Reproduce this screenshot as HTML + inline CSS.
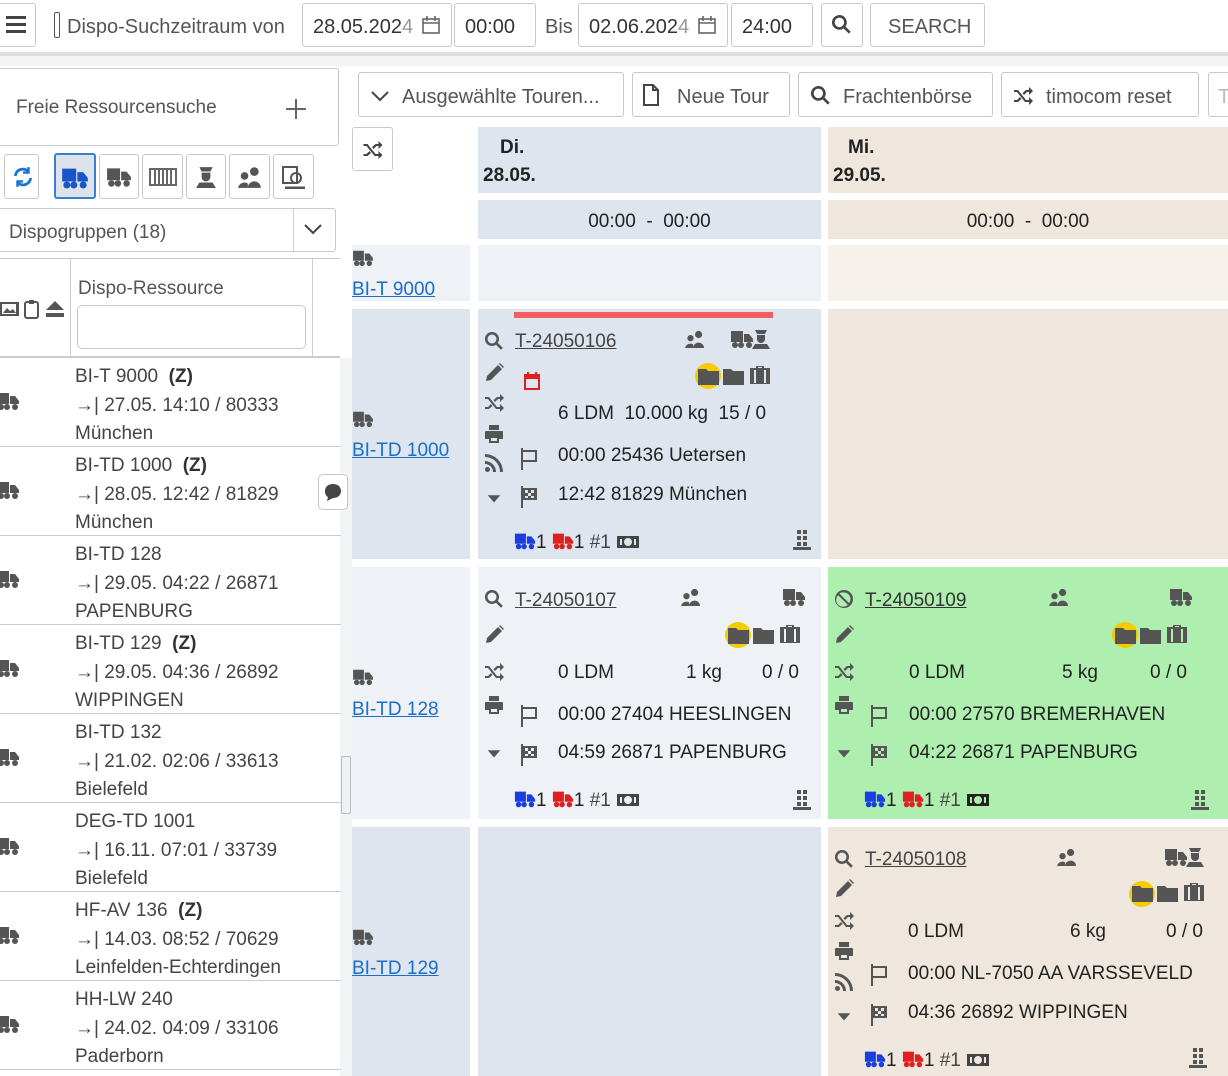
<!DOCTYPE html>
<html><head><meta charset="utf-8">
<style>
*{box-sizing:border-box;margin:0;padding:0}
body{width:1228px;height:1076px;overflow:hidden;background:#fff;font-family:"Liberation Sans",sans-serif;font-size:19px;color:#222;position:relative}
.a{position:absolute}
.box{position:absolute;border:1px solid #c8c8c8;border-radius:3px;background:#fff}
.g{color:#555}
.t{white-space:nowrap;line-height:22px;margin-top:2px}
svg.i{position:absolute;fill:#555}
u{text-decoration:underline}
a.l{color:#1a6fc9;text-decoration:underline}
</style></head><body>
<svg width="0" height="0" style="position:absolute">
<defs>
<symbol id="truck" viewBox="0 0 24 20"><path d="M1 2h12v11H1zM14 5h5l4 5v3h-9z"/><circle cx="5" cy="16" r="3"/><circle cx="11" cy="16" r="3"/><circle cx="19" cy="16" r="3"/></symbol>
<symbol id="search" viewBox="0 0 20 20"><path d="M8 1a7 7 0 1 0 4 12.7l5 5 1.8-1.8-5-5A7 7 0 0 0 8 1zm0 2.5a4.5 4.5 0 1 1 0 9 4.5 4.5 0 0 1 0-9z"/></symbol>
<symbol id="pencil" viewBox="0 0 20 20"><path d="M2 18l1-5L14 2l4 4L7 17zM15 1l4 4 1-1-4-4z"/></symbol>
<symbol id="shuf" viewBox="0 0 20 20"><path d="M1 5h4l8 10h3v-3l4 4-4 4v-3h-4L4 7H1zM1 15h3l3-3 1.5 2L5 17H1zM13 5h3V2l4 4-4 4V7h-2l-3 3-1.5-2z"/></symbol>
<symbol id="print" viewBox="0 0 20 20"><path d="M5 1h10v5H5zM2 7h16a1 1 0 0 1 1 1v7h-4v4H5v-4H1V8a1 1 0 0 1 1-1zm5 7v3h6v-3z"/></symbol>
<symbol id="rss" viewBox="0 0 20 20"><circle cx="3.5" cy="16.5" r="2.5"/><path d="M1 8a11 11 0 0 1 11 11H9a8 8 0 0 0-8-8zM1 1a18 18 0 0 1 18 18h-3A15 15 0 0 0 1 4z"/></symbol>
<symbol id="caret" viewBox="0 0 20 20"><path d="M3 7h14l-7 8z"/></symbol>
<symbol id="flag" viewBox="0 0 20 24"><path d="M2 1h2v22H2zM4 3h14v12H4v-2h12V5H4z"/></symbol>
<symbol id="check" viewBox="0 0 20 24"><path d="M2 1h2v22H2zM4 3h14v12H4zM6 5v3h3V5zm6 0v3h3V5zM9 8v3h3V8zm-3 3v2h3v-2zm6 0v2h3v-2z"/></symbol>
<symbol id="ppl" viewBox="0 0 24 20"><circle cx="16" cy="5" r="4"/><circle cx="7" cy="9" r="3.5"/><path d="M10 20a6 6 0 0 1 12 0zM1 20a6 6 0 0 1 9-4v4z"/></symbol>
<symbol id="folder" viewBox="0 0 24 20"><path d="M1 3h8l2 2h11v14H1z"/></symbol>
<symbol id="brief" viewBox="0 0 24 20"><path d="M8 3V1h8v2h6v16H2V3zm2 0h4V2h-4zM6 5v13h2V5zm10 0v13h2V5z"/></symbol>
<symbol id="cash" viewBox="0 0 24 16"><path d="M1 2h22v12H1zm11 2a4 4 0 1 0 0 8 4 4 0 0 0 0-8zM4 5v6h2V5zm14 0v6h2V5z"/></symbol>
<symbol id="pal" viewBox="0 0 20 22"><path d="M5 1h4v4H5zm6 0h4v4h-4zM5 7h4v4H5zm6 0h4v4h-4zM5 13h4v4H5zm6 0h4v4h-4zM1 18h18v3H1z"/></symbol>
<symbol id="drv" viewBox="0 0 20 20"><path d="M4 1h12l-2 4H6zM6 6h8v4a4 4 0 0 1-8 0zM1 20l3-5h12l3 5z"/></symbol>
<symbol id="cal" viewBox="0 0 20 20"><path d="M2 3h16v16H2zm2 5v9h12V8zM5 1h2v3H5zm8 0h2v3h-2z"/></symbol>
<symbol id="ban" viewBox="0 0 20 20"><path d="M10 1a9 9 0 1 0 0 18 9 9 0 0 0 0-18zm0 2.5a6.5 6.5 0 0 1 5 10.6L5.4 4.5A6.5 6.5 0 0 1 10 3.5zM4.2 6.2l9.6 9.6A6.5 6.5 0 0 1 4.2 6.2z"/></symbol>
</defs></svg>

<div class="a" style="left:0;top:0;width:1228px;height:52px;background:#fff"></div>
<div class="a" style="left:0;top:52px;width:1228px;height:4px;background:#dcdcdc"></div>
<div class="a" style="left:0;top:56px;width:1228px;height:10px;background:#f3f4f6"></div>
<div class="box" style="left:-4px;top:3px;width:40px;height:44px"></div>
<div class="a" style="left:6px;top:16px;width:20px;height:3px;background:#444;box-shadow:0 7px 0 #444,0 14px 0 #444"></div>
<div class="a" style="left:54px;top:12px;width:6px;height:26px;border:1.5px solid #555;border-radius:2px"></div>
<div class="a t g" style="left:67px;top:14px;font-size:20px">Dispo-Suchzeitraum von</div>
<div class="box" style="left:302px;top:3px;width:150px;height:44px"></div>
<div class="a t" style="left:313px;top:14px;font-size:20px;color:#333">28.05.202<span style="opacity:.5">4</span></div>
<svg class="i" style="left:421px;top:15px;fill:none;stroke:#666;stroke-width:1.6" width="20" height="20" viewBox="0 0 20 20"><rect x="2" y="4" width="16" height="14"/><path d="M2 8h16M6 1v5M14 1v5"/></svg>
<div class="box" style="left:454px;top:3px;width:82px;height:44px"></div>
<div class="a t" style="left:465px;top:14px;font-size:20px;color:#333">00:00</div>
<div class="a t g" style="left:545px;top:14px;font-size:20px">Bis</div>
<div class="box" style="left:578px;top:3px;width:150px;height:44px"></div>
<div class="a t" style="left:589px;top:14px;font-size:20px;color:#333">02.06.202<span style="opacity:.5">4</span></div>
<svg class="i" style="left:697px;top:15px;fill:none;stroke:#666;stroke-width:1.6" width="20" height="20" viewBox="0 0 20 20"><rect x="2" y="4" width="16" height="14"/><path d="M2 8h16M6 1v5M14 1v5"/></svg>
<div class="box" style="left:731px;top:3px;width:82px;height:44px"></div>
<div class="a t" style="left:742px;top:14px;font-size:20px;color:#333">24:00</div>
<div class="box" style="left:821px;top:3px;width:42px;height:44px"></div>
<svg class="i" style="left:831px;top:14px;fill:#444" width="21" height="21"><use href="#search"/></svg>
<div class="box" style="left:870px;top:3px;width:115px;height:44px"></div>
<div class="a t g" style="left:888px;top:14px;font-size:20px">SEARCH</div>

<div class="box" style="left:-4px;top:68px;width:343px;height:78px"></div>
<div class="a t g" style="left:16px;top:95px;font-size:19px">Freie Ressourcensuche</div>
<div class="a" style="left:286px;top:108px;width:20px;height:2px;background:#666"></div>
<div class="a" style="left:295px;top:99px;width:2px;height:20px;background:#666"></div>

<div class="box" style="left:4px;top:154px;width:35px;height:45px"></div>
<svg class="a" style="left:12px;top:166px" width="22" height="22" viewBox="0 0 20 20" fill="none" stroke="#1a73d9" stroke-width="2.6"><path d="M3 9a7 7 0 0 1 12-4M17 11a7 7 0 0 1-12 4"/><path d="M15 1v5h-5M5 19v-5h5" stroke-width="2.2"/></svg>
<div class="box" style="left:54px;top:153px;width:42px;height:46px;background:#dde3ea;border:2px solid #3b7ed0"></div>
<svg class="i" style="left:61px;top:166px;fill:#1a55c8" width="28" height="24"><use href="#truck"/></svg>
<div class="box" style="left:99px;top:154px;width:40px;height:45px"></div>
<svg class="i" style="left:106px;top:166px;fill:#555" width="26" height="22"><use href="#truck"/></svg>
<div class="box" style="left:142px;top:154px;width:41px;height:45px"></div>
<svg class="a" style="left:149px;top:168px" width="28" height="18" viewBox="0 0 28 18" fill="none" stroke="#666" stroke-width="2"><rect x="1" y="1" width="26" height="16"/><path d="M6 2v14M10 2v14M14 2v14M18 2v14M22 2v14"/></svg>
<div class="box" style="left:186px;top:154px;width:40px;height:45px"></div>
<svg class="i" style="left:195px;top:166px;fill:#555" width="22" height="22"><use href="#drv"/></svg>
<div class="box" style="left:229px;top:154px;width:41px;height:45px"></div>
<svg class="i" style="left:237px;top:166px;fill:#555" width="26" height="22"><use href="#ppl"/></svg>
<div class="box" style="left:273px;top:154px;width:41px;height:45px"></div>
<svg class="a" style="left:281px;top:165px" width="26" height="24" viewBox="0 0 26 24" fill="none" stroke="#555" stroke-width="2"><rect x="2" y="2" width="14" height="16"/><circle cx="15" cy="13" r="5"/><path d="M4 23h20" stroke-width="3"/></svg>

<div class="box" style="left:-4px;top:208px;width:340px;height:44px"></div>
<div class="a" style="left:293px;top:209px;width:1px;height:42px;background:#ccc"></div>
<div class="a t g" style="left:9px;top:220px;font-size:19px">Dispogruppen (18)</div>
<svg class="a" style="left:303px;top:222px" width="20" height="14" fill="none" stroke="#444" stroke-width="2"><path d="M2 3l8 8 8-8"/></svg>

<div class="a" style="left:0;top:258px;width:340px;height:1px;background:#ccc"></div>
<div class="a" style="left:70px;top:259px;width:1px;height:98px;background:#ccc"></div>
<div class="a" style="left:312px;top:259px;width:1px;height:98px;background:#ccc"></div>
<div class="a" style="left:0;top:356px;width:340px;height:2px;background:#ccc"></div>
<svg class="a" style="left:0;top:299px" width="66" height="20" viewBox="0 0 66 20"><rect x="0" y="3" width="19" height="14" fill="#555"/><rect x="2" y="5" width="14" height="10" fill="#fff"/><path d="M3 14l4-5 3 3 3-2 3 4z" fill="#555"/><rect x="25" y="3" width="13" height="16" rx="2" fill="none" stroke="#555" stroke-width="2"/><rect x="29" y="1" width="5" height="4" fill="#555"/><path d="M46 11l9-9 9 9zM46 14h18v4H46z" fill="#555"/></svg>
<div class="a t g" style="left:78px;top:276px;font-size:19px">Dispo-Ressource</div>
<div class="box" style="left:77px;top:305px;width:229px;height:44px;border-radius:5px"></div>

<div class="a" style="left:340px;top:358px;width:12px;height:718px;background:#f1f3f5"></div>
<div class="a" style="left:341px;top:756px;width:10px;height:58px;border:1px solid #bbb;background:#eef0f3;border-radius:2px"></div>

<div class="a" style="left:0;top:358px;width:341px">
<div style="position:relative;height:89px;border-bottom:1px solid #ccc"><svg class="i" style="left:-4px;top:33px" width="24" height="20"><use href="#truck"/></svg><div class="a t" style="left:75px;top:6px;color:#444">BI-T 9000 &nbsp;<b style="color:#333">(Z)</b></div><div class="a t" style="left:75px;top:35px;color:#444">→| 27.05. 14:10 / 80333</div><div class="a t" style="left:75px;top:63px;color:#444">München</div></div>
<div style="position:relative;height:89px;border-bottom:1px solid #ccc"><svg class="i" style="left:-4px;top:33px" width="24" height="20"><use href="#truck"/></svg><div class="a t" style="left:75px;top:6px;color:#444">BI-TD 1000 &nbsp;<b style="color:#333">(Z)</b></div><div class="a t" style="left:75px;top:35px;color:#444">→| 28.05. 12:42 / 81829</div><div class="a t" style="left:75px;top:63px;color:#444">München</div><div class="box" style="left:318px;top:27px;width:30px;height:36px;border-radius:5px"></div><svg class="a" style="left:324px;top:36px" width="18" height="18" viewBox="0 0 18 18"><path d="M9 1c5 0 8 3 8 7s-3 7-8 7l-6 3 1-4C2 13 1 11 1 8c0-4 3-7 8-7z" fill="#444"/></svg></div>
<div style="position:relative;height:89px;border-bottom:1px solid #ccc"><svg class="i" style="left:-4px;top:33px" width="24" height="20"><use href="#truck"/></svg><div class="a t" style="left:75px;top:6px;color:#444">BI-TD 128</div><div class="a t" style="left:75px;top:35px;color:#444">→| 29.05. 04:22 / 26871</div><div class="a t" style="left:75px;top:63px;color:#444">PAPENBURG</div></div>
<div style="position:relative;height:89px;border-bottom:1px solid #ccc"><svg class="i" style="left:-4px;top:33px" width="24" height="20"><use href="#truck"/></svg><div class="a t" style="left:75px;top:6px;color:#444">BI-TD 129 &nbsp;<b style="color:#333">(Z)</b></div><div class="a t" style="left:75px;top:35px;color:#444">→| 29.05. 04:36 / 26892</div><div class="a t" style="left:75px;top:63px;color:#444">WIPPINGEN</div></div>
<div style="position:relative;height:89px;border-bottom:1px solid #ccc"><svg class="i" style="left:-4px;top:33px" width="24" height="20"><use href="#truck"/></svg><div class="a t" style="left:75px;top:6px;color:#444">BI-TD 132</div><div class="a t" style="left:75px;top:35px;color:#444">→| 21.02. 02:06 / 33613</div><div class="a t" style="left:75px;top:63px;color:#444">Bielefeld</div></div>
<div style="position:relative;height:89px;border-bottom:1px solid #ccc"><svg class="i" style="left:-4px;top:33px" width="24" height="20"><use href="#truck"/></svg><div class="a t" style="left:75px;top:6px;color:#444">DEG-TD 1001</div><div class="a t" style="left:75px;top:35px;color:#444">→| 16.11. 07:01 / 33739</div><div class="a t" style="left:75px;top:63px;color:#444">Bielefeld</div></div>
<div style="position:relative;height:89px;border-bottom:1px solid #ccc"><svg class="i" style="left:-4px;top:33px" width="24" height="20"><use href="#truck"/></svg><div class="a t" style="left:75px;top:6px;color:#444">HF-AV 136 &nbsp;<b style="color:#333">(Z)</b></div><div class="a t" style="left:75px;top:35px;color:#444">→| 14.03. 08:52 / 70629</div><div class="a t" style="left:75px;top:63px;color:#444">Leinfelden-Echterdingen</div></div>
<div style="position:relative;height:89px;border-bottom:1px solid #ccc"><svg class="i" style="left:-4px;top:33px" width="24" height="20"><use href="#truck"/></svg><div class="a t" style="left:75px;top:6px;color:#444">HH-LW 240</div><div class="a t" style="left:75px;top:35px;color:#444">→| 24.02. 04:09 / 33106</div><div class="a t" style="left:75px;top:63px;color:#444">Paderborn</div></div>
</div>

<div class="box" style="left:358px;top:72px;width:266px;height:45px"></div>
<svg class="a" style="left:370px;top:89px" width="20" height="14" fill="none" stroke="#444" stroke-width="2"><path d="M2 3l8 8 8-8"/></svg>
<div class="a t g" style="left:402px;top:84px;font-size:20px">Ausgewählte Touren...</div>
<div class="box" style="left:632px;top:72px;width:158px;height:45px"></div>
<svg class="a" style="left:642px;top:84px" width="18" height="22" viewBox="0 0 18 22" fill="none" stroke="#444" stroke-width="2"><path d="M2 1h9l5 5v15H2zM11 1v5h5"/></svg>
<div class="a t g" style="left:677px;top:84px;font-size:20px">Neue Tour</div>
<div class="box" style="left:798px;top:72px;width:195px;height:45px"></div>
<svg class="i" style="left:810px;top:85px;fill:#444" width="21" height="21"><use href="#search"/></svg>
<div class="a t g" style="left:843px;top:84px;font-size:20px">Frachtenbörse</div>
<div class="box" style="left:1001px;top:72px;width:198px;height:45px"></div>
<svg class="i" style="left:1012px;top:85px;fill:#444" width="22" height="20"><use href="#shuf"/></svg>
<div class="a t g" style="left:1046px;top:84px;font-size:20px">timocom reset</div>
<div class="box" style="left:1208px;top:72px;width:40px;height:45px"></div>
<div class="a t" style="left:1218px;top:84px;font-size:20px;color:#bbb">T</div>

<div class="box" style="left:352px;top:127px;width:41px;height:44px"></div>
<svg class="i" style="left:362px;top:139px;fill:#444" width="21" height="20"><use href="#shuf"/></svg>

<div class="a" style="left:478px;top:127px;width:343px;height:66px;background:#dfe5ee"></div>
<div class="a t" style="left:500px;top:135px;font-weight:bold;font-size:19px">Di.</div>
<div class="a t" style="left:483px;top:163px;font-weight:bold;font-size:19px">28.05.</div>
<div class="a" style="left:828px;top:127px;width:400px;height:66px;background:#efe7dd"></div>
<div class="a t" style="left:848px;top:135px;font-weight:bold;font-size:19px">Mi.</div>
<div class="a t" style="left:833px;top:163px;font-weight:bold;font-size:19px">29.05.</div>
<div class="a" style="left:478px;top:200px;width:343px;height:39px;background:#dfe5ee"></div>
<div class="a t" style="left:478px;top:209px;width:343px;text-align:center;font-size:19px">00:00 &nbsp;- &nbsp;00:00</div>
<div class="a" style="left:828px;top:200px;width:400px;height:39px;background:#efe7dd"></div>
<div class="a t" style="left:828px;top:209px;width:400px;text-align:center;font-size:19px">00:00 &nbsp;- &nbsp;00:00</div>

<div class="a" style="left:352px;top:245px;width:118px;height:56px;background:#eef2f7"></div>
<div class="a" style="left:478px;top:245px;width:343px;height:56px;background:#eef2f7"></div>
<div class="a" style="left:828px;top:245px;width:400px;height:56px;background:#f6f1eb"></div>
<svg class="i" style="left:352px;top:249px" width="22" height="18"><use href="#truck"/></svg>
<a class="a t l" style="left:352px;top:277px;font-size:19px">BI-T 9000</a>

<div class="a" style="left:352px;top:309px;width:118px;height:250px;background:#dfe5ee"></div>
<div class="a" style="left:478px;top:309px;width:343px;height:250px;background:#dfe5ee"></div>
<div class="a" style="left:828px;top:309px;width:400px;height:250px;background:#efe7dd"></div>
<svg class="i" style="left:352px;top:410px" width="22" height="18"><use href="#truck"/></svg>
<a class="a t l" style="left:352px;top:438px;font-size:19px">BI-TD 1000</a>

<div class="a" style="left:352px;top:567px;width:118px;height:252px;background:#eef2f7"></div>
<div class="a" style="left:478px;top:567px;width:343px;height:252px;background:#eef2f7"></div>
<div class="a" style="left:828px;top:567px;width:400px;height:252px;background:#aeeeae"></div>
<svg class="i" style="left:352px;top:668px" width="22" height="18"><use href="#truck"/></svg>
<a class="a t l" style="left:352px;top:697px;font-size:19px">BI-TD 128</a>

<div class="a" style="left:352px;top:827px;width:118px;height:249px;background:#dfe5ee"></div>
<div class="a" style="left:478px;top:827px;width:343px;height:249px;background:#dfe5ee"></div>
<div class="a" style="left:828px;top:827px;width:400px;height:249px;background:#efe7dd"></div>
<svg class="i" style="left:352px;top:928px" width="22" height="18"><use href="#truck"/></svg>
<a class="a t l" style="left:352px;top:956px;font-size:19px">BI-TD 129</a>

<div class="a" style="left:478px;top:309px;width:343px;height:250px">
<div class="a" style="left:36px;top:3px;width:259px;height:6px;background:#f06060"></div>
<svg class="i" style="left:6px;top:22px" width="20" height="20"><use href="#search"/></svg>
<div class="a t" style="left:37px;top:20px;color:#444"><u>T-24050106</u></div>
<svg class="i" style="left:206px;top:21px" width="22" height="18"><use href="#ppl"/></svg>
<svg class="i" style="left:252px;top:20px" width="24" height="20"><use href="#truck"/></svg>
<svg class="i" style="left:273px;top:20px" width="20" height="20"><use href="#drv"/></svg>
<svg class="i" style="left:6px;top:54px" width="20" height="20"><use href="#pencil"/></svg>
<svg class="i" style="left:44px;top:62px;fill:#e02020" width="20" height="20"><use href="#cal"/></svg>
<div class="a" style="left:217px;top:54px;width:26px;height:26px;border-radius:50%;background:#f5cc00"></div>
<svg class="i" style="left:219px;top:57px" width="24" height="20"><use href="#folder"/></svg>
<svg class="i" style="left:244px;top:57px" width="24" height="20"><use href="#folder"/></svg>
<svg class="i" style="left:270px;top:55px" width="24" height="22"><use href="#brief"/></svg>
<svg class="i" style="left:6px;top:83px" width="20" height="20"><use href="#shuf"/></svg>
<div class="a t" style="left:80px;top:92px">6 LDM &nbsp;10.000 kg &nbsp;15 / 0</div>
<svg class="i" style="left:6px;top:115px" width="20" height="20"><use href="#print"/></svg>
<svg class="i" style="left:6px;top:144px" width="20" height="20"><use href="#rss"/></svg>
<svg class="i" style="left:40px;top:138px" width="22" height="24"><use href="#flag"/></svg>
<div class="a t" style="left:80px;top:134px">00:00 25436 Uetersen</div>
<svg class="i" style="left:7px;top:180px" width="18" height="18"><use href="#caret"/></svg>
<svg class="i" style="left:40px;top:176px" width="22" height="24"><use href="#check"/></svg>
<div class="a t" style="left:80px;top:173px">12:42 81829 München</div>
<div class="a" style="left:36px;top:222px;height:24px;white-space:nowrap;font-size:19px"><svg width="22" height="20" style="fill:#1a3ee0;vertical-align:-3px"><use href="#truck"/></svg>1 <svg width="22" height="20" style="fill:#e02020;vertical-align:-3px"><use href="#truck"/></svg>1 <span style="color:#444">#1</span> <svg width="24" height="16" style="fill:#444;vertical-align:-2px"><use href="#cash"/></svg></div>
<svg class="i" style="left:314px;top:220px" width="20" height="22"><use href="#pal"/></svg>
</div>

<div class="a" style="left:478px;top:567px;width:343px;height:252px">
<svg class="i" style="left:6px;top:22px" width="20" height="20"><use href="#search"/></svg>
<div class="a t" style="left:37px;top:21px;color:#444"><u>T-24050107</u></div>
<svg class="i" style="left:202px;top:21px" width="22" height="18"><use href="#ppl"/></svg>
<svg class="i" style="left:304px;top:20px" width="24" height="20"><use href="#truck"/></svg>
<svg class="i" style="left:6px;top:58px" width="20" height="20"><use href="#pencil"/></svg>
<div class="a" style="left:247px;top:55px;width:26px;height:26px;border-radius:50%;background:#f5cc00"></div>
<svg class="i" style="left:249px;top:58px" width="24" height="20"><use href="#folder"/></svg>
<svg class="i" style="left:274px;top:58px" width="24" height="20"><use href="#folder"/></svg>
<svg class="i" style="left:300px;top:56px" width="24" height="22"><use href="#brief"/></svg>
<svg class="i" style="left:6px;top:94px" width="20" height="20"><use href="#shuf"/></svg>
<div class="a t" style="left:80px;top:93px">0 LDM</div>
<div class="a t" style="left:208px;top:93px">1 kg</div>
<div class="a t" style="left:284px;top:93px">0 / 0</div>
<svg class="i" style="left:6px;top:128px" width="20" height="20"><use href="#print"/></svg>
<svg class="i" style="left:40px;top:137px" width="22" height="24"><use href="#flag"/></svg>
<div class="a t" style="left:80px;top:135px">00:00 27404 HEESLINGEN</div>
<svg class="i" style="left:7px;top:177px" width="18" height="18"><use href="#caret"/></svg>
<svg class="i" style="left:40px;top:176px" width="22" height="24"><use href="#check"/></svg>
<div class="a t" style="left:80px;top:173px">04:59 26871 PAPENBURG</div>
<div class="a" style="left:36px;top:222px;height:24px;white-space:nowrap;font-size:19px"><svg width="22" height="20" style="fill:#1a3ee0;vertical-align:-3px"><use href="#truck"/></svg>1 <svg width="22" height="20" style="fill:#e02020;vertical-align:-3px"><use href="#truck"/></svg>1 <span style="color:#444">#1</span> <svg width="24" height="16" style="fill:#444;vertical-align:-2px"><use href="#cash"/></svg></div>
<svg class="i" style="left:314px;top:222px" width="20" height="22"><use href="#pal"/></svg>
</div>

<div class="a" style="left:828px;top:567px;width:400px;height:252px">
<svg class="i" style="left:6px;top:22px" width="20" height="20"><use href="#ban"/></svg>
<div class="a t" style="left:37px;top:21px;color:#333"><u>T-24050109</u></div>
<svg class="i" style="left:220px;top:21px" width="22" height="18"><use href="#ppl"/></svg>
<svg class="i" style="left:341px;top:20px" width="24" height="20"><use href="#truck"/></svg>
<svg class="i" style="left:6px;top:58px" width="20" height="20"><use href="#pencil"/></svg>
<div class="a" style="left:284px;top:55px;width:26px;height:26px;border-radius:50%;background:#f5cc00"></div>
<svg class="i" style="left:286px;top:58px" width="24" height="20"><use href="#folder"/></svg>
<svg class="i" style="left:311px;top:58px" width="24" height="20"><use href="#folder"/></svg>
<svg class="i" style="left:337px;top:56px" width="24" height="22"><use href="#brief"/></svg>
<svg class="i" style="left:6px;top:94px" width="20" height="20"><use href="#shuf"/></svg>
<div class="a t" style="left:81px;top:93px">0 LDM</div>
<div class="a t" style="left:234px;top:93px">5 kg</div>
<div class="a t" style="left:322px;top:93px">0 / 0</div>
<svg class="i" style="left:6px;top:128px" width="20" height="20"><use href="#print"/></svg>
<svg class="i" style="left:40px;top:137px" width="22" height="24"><use href="#flag"/></svg>
<div class="a t" style="left:81px;top:135px">00:00 27570 BREMERHAVEN</div>
<svg class="i" style="left:7px;top:177px" width="18" height="18"><use href="#caret"/></svg>
<svg class="i" style="left:40px;top:176px" width="22" height="24"><use href="#check"/></svg>
<div class="a t" style="left:81px;top:173px">04:22 26871 PAPENBURG</div>
<div class="a" style="left:36px;top:222px;height:24px;white-space:nowrap;font-size:19px"><svg width="22" height="20" style="fill:#1a3ee0;vertical-align:-3px"><use href="#truck"/></svg>1 <svg width="22" height="20" style="fill:#e02020;vertical-align:-3px"><use href="#truck"/></svg>1 <span style="color:#444">#1</span> <svg width="24" height="16" style="fill:#222;vertical-align:-2px"><use href="#cash"/></svg></div>
<svg class="i" style="left:362px;top:222px" width="20" height="22"><use href="#pal"/></svg>
</div>

<div class="a" style="left:828px;top:827px;width:400px;height:249px">
<svg class="i" style="left:6px;top:22px" width="20" height="20"><use href="#search"/></svg>
<div class="a t" style="left:37px;top:20px;color:#444"><u>T-24050108</u></div>
<svg class="i" style="left:228px;top:21px" width="22" height="18"><use href="#ppl"/></svg>
<svg class="i" style="left:336px;top:20px" width="24" height="20"><use href="#truck"/></svg>
<svg class="i" style="left:357px;top:20px" width="20" height="20"><use href="#drv"/></svg>
<svg class="i" style="left:6px;top:52px" width="20" height="20"><use href="#pencil"/></svg>
<div class="a" style="left:301px;top:54px;width:26px;height:26px;border-radius:50%;background:#f5cc00"></div>
<svg class="i" style="left:303px;top:56px" width="24" height="20"><use href="#folder"/></svg>
<svg class="i" style="left:328px;top:56px" width="24" height="20"><use href="#folder"/></svg>
<svg class="i" style="left:354px;top:54px" width="24" height="22"><use href="#brief"/></svg>
<svg class="i" style="left:6px;top:83px" width="20" height="20"><use href="#shuf"/></svg>
<div class="a t" style="left:80px;top:92px">0 LDM</div>
<div class="a t" style="left:242px;top:92px">6 kg</div>
<div class="a t" style="left:338px;top:92px">0 / 0</div>
<svg class="i" style="left:6px;top:114px" width="20" height="20"><use href="#print"/></svg>
<svg class="i" style="left:6px;top:145px" width="20" height="20"><use href="#rss"/></svg>
<svg class="i" style="left:40px;top:136px" width="22" height="24"><use href="#flag"/></svg>
<div class="a t" style="left:80px;top:134px">00:00 NL-7050 AA VARSSEVELD</div>
<svg class="i" style="left:7px;top:180px" width="18" height="18"><use href="#caret"/></svg>
<svg class="i" style="left:40px;top:176px" width="22" height="24"><use href="#check"/></svg>
<div class="a t" style="left:80px;top:173px">04:36 26892 WIPPINGEN</div>
<div class="a" style="left:36px;top:222px;height:24px;white-space:nowrap;font-size:19px"><svg width="22" height="20" style="fill:#1a3ee0;vertical-align:-3px"><use href="#truck"/></svg>1 <svg width="22" height="20" style="fill:#e02020;vertical-align:-3px"><use href="#truck"/></svg>1 <span style="color:#444">#1</span> <svg width="24" height="16" style="fill:#444;vertical-align:-2px"><use href="#cash"/></svg></div>
<svg class="i" style="left:360px;top:220px" width="20" height="22"><use href="#pal"/></svg>
</div>

</body></html>
